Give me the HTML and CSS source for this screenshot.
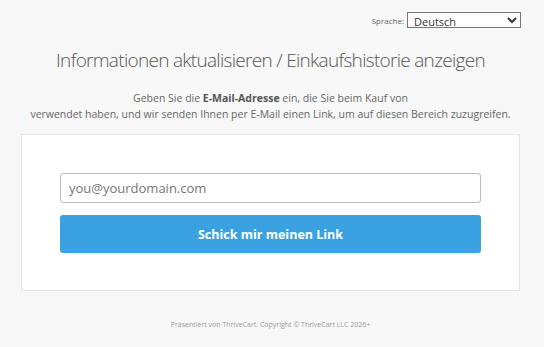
FILE: index.html
```html
<!DOCTYPE html>
<html lang="de">
<head>
  <meta charset="UTF-8">
  <meta name="viewport" content="width=device-width, initial-scale=1.0">
  <title>Informationen aktualisieren</title>
  <link rel="stylesheet" href="styles.css">
</head>
<body>
  <div class="lang-bar">
    <label for="lang">Sprache:</label>
    <select id="lang">
      <option>Deutsch</option>
    </select>
  </div>

  <h1>Informationen aktualisieren / Einkaufshistorie anzeigen</h1>

  <p class="intro">
    Geben Sie die <strong>E-Mail-Adresse</strong> ein, die Sie beim Kauf von<br>
    verwendet haben, und wir senden Ihnen per E-Mail einen Link, um auf diesen Bereich zuzugreifen.
  </p>

  <div class="card">
    <input type="email" class="email" placeholder="you@yourdomain.com">
    <button class="send">Schick mir meinen Link</button>
  </div>

  <p class="footer">Präsentiert von ThriveCart. Copyright © ThriveCart LLC 2026+</p>
</body>
</html>
```

FILE: styles.css
```css
body {
  margin: 0;
  padding: 12px 24px 0 21px;
  background-color: #f8f8f8;
  font-family: "Open Sans", "Noto Sans", sans-serif;
  color: #555;
}

.lang-bar {
  display: flex;
  justify-content: flex-end;
  align-items: center;
  gap: 3px;
  margin-right: -1px;
}

.lang-bar label {
  font-size: 8px;
  color: #666;
}

.lang-bar select {
  width: 114px;
  height: 16px;
  font-family: inherit;
  font-size: 11px;
  color: #333;
  border: 1px solid #777;
  border-radius: 0;
  background-color: #fff;
  padding: 0 2px;
}

h1 {
  margin: 19px 0 0 0;
  text-align: center;
  font-size: 19px;
  font-weight: 300;
  color: #555;
  letter-spacing: -0.7px;
}

.intro {
  margin: 17px 0 0 0;
  text-align: center;
  font-size: 10.5px;
  line-height: 16px;
  color: #666;
}

.intro strong {
  color: #555;
}

.card {
  margin-top: 12px;
  background-color: #fff;
  border: 1px solid #e6e6e6;
  padding: 38px 38px 37px 38px;
  display: flex;
  flex-direction: column;
  gap: 12px;
}

.email {
  height: 30px;
  box-sizing: border-box;
  border: 1px solid #bbb;
  border-radius: 3px;
  padding: 0 8px;
  font-family: inherit;
  font-size: 13px;
  color: #333;
}

.email::placeholder {
  color: #777;
}

.send {
  height: 38px;
  border: none;
  border-radius: 3px;
  background-color: #3ba2e1;
  color: #fff;
  font-family: inherit;
  font-size: 12.5px;
  font-weight: 700;
  cursor: pointer;
}

.footer {
  margin: 29px 0 0 0;
  text-align: center;
  font-size: 7px;
  color: #999;
}
```
